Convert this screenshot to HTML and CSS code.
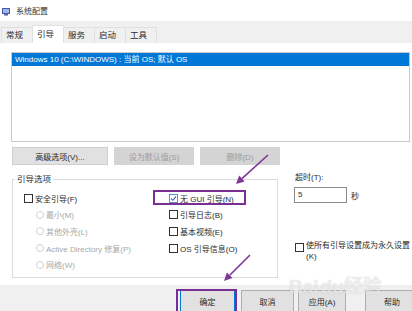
FILE: index.html
```html
<!DOCTYPE html>
<html lang="zh-CN">
<head>
<meta charset="utf-8">
<title>系统配置</title>
<link rel="stylesheet" href="styles.css">
</head>
<body>
<div class="titlebar">
  <svg class="appicon" viewBox="0 0 8 8"><rect x="0.5" y="0.5" width="7" height="5" fill="#9fb6ea" stroke="#4a56a8"/><rect x="2" y="6" width="4" height="1.6" fill="#6a6aa0"/></svg>
  <span class="title">系统配置</span>
</div>
<div class="tabbar">
  <div class="tab">常规</div>
  <div class="tab active">引导</div>
  <div class="tab">服务</div>
  <div class="tab">启动</div>
  <div class="tab">工具</div>
</div>
<div class="page">
  <div class="listbox">
    <div class="item">Windows 10 (C:\WINDOWS) : 当前 OS; 默认 OS</div>
  </div>
  <div class="btnrow">
    <button class="btn w96">高级选项(V)...</button>
    <button class="btn w80" disabled>设为默认值(S)</button>
    <button class="btn w80" disabled>删除(D)</button>
  </div>
  <div class="lower">
    <div class="group">
      <div class="legend">引导选项</div>
      <div class="cols">
        <div class="col">
          <div class="opt"><span class="cb"></span>安全引导(F)</div>
          <div class="opt sub"><span class="rb"></span>最小(M)</div>
          <div class="opt sub"><span class="rb"></span>其他外壳(L)</div>
          <div class="opt sub"><span class="rb"></span>Active Directory 修复(P)</div>
          <div class="opt sub"><span class="rb"></span>网络(W)</div>
        </div>
        <div class="col">
          <div class="opt"><span class="cb checked"><svg viewBox="0 0 7 7"><path d="M1 3.6 L2.8 5.3 L6 1.6" fill="none" stroke="#2d63b0" stroke-width="1.1"/></svg></span>无 GUI 引导(N)</div>
          <div class="opt"><span class="cb"></span>引导日志(B)</div>
          <div class="opt"><span class="cb"></span>基本视频(E)</div>
          <div class="opt"><span class="cb"></span>OS 引导信息(O)</div>
        </div>
      </div>
    </div>
    <div class="side">
      <div class="lbl">超时(T):</div>
      <div class="timeout"><div class="input">5</div><span class="unit">秒</span></div>
      <div class="perm"><span class="cb"></span><span class="ptext">使所有引导设置成为永久设置<br>(K)</span></div>
    </div>
  </div>
</div>
<div class="footer">
  <button class="btn fbtn default">确定</button>
  <button class="btn fbtn cancel">取消</button>
  <button class="btn fbtn apply">应用(A)</button>
  <button class="btn fbtn help">帮助</button>
</div>
<div class="watermark">Bai<span class="wm2">du</span>经验</div>
<svg class="annot" viewBox="0 0 412 311">
  <rect x="154" y="191" width="91" height="13" fill="none" stroke="#7a2f95" stroke-width="2"/>
  <rect x="177" y="290" width="59" height="24" fill="none" stroke="#7a2f95" stroke-width="2"/>
  <line x1="268" y1="155" x2="241.9" y2="178.6" stroke="#7e3796" stroke-width="1.6"/>
  <polygon points="236,184 244.6,181.6 239.2,175.6" fill="#7e3796"/>
  <line x1="250" y1="255" x2="229.7" y2="275.3" stroke="#7e3796" stroke-width="1.6"/>
  <polygon points="224,281 232.5,278.1 226.9,272.5" fill="#7e3796"/>
</svg>
</body>
</html>
```
FILE: styles.css
```css
* { box-sizing: border-box; }
body {
  margin: 0;
  width: 412px;
  height: 311px;
  overflow: hidden;
  position: relative;
  background: #fff;
  font-family: "Liberation Sans", "Noto Sans CJK SC", sans-serif;
  font-size: 8px;
  color: #2a2a2a;
}
.titlebar {
  height: 21px;
  padding: 2px 0 0 2px;
  display: flex;
  align-items: center;
  gap: 6px;
}
.appicon { width: 8px; height: 8px; display: block; }
.title { line-height: 10px; color: #333; }
.tabbar {
  height: 22px;
  background: #f0f0f0;
  display: flex;
  align-items: flex-end;
  padding-left: 1px;
}
.tab {
  height: 16px;
  line-height: 15px;
  padding: 0 9px 0 4px;
  font-size: 8.5px;
  border: 1px solid #e0e0e0;
  border-bottom: none;
  margin-right: -1px;
  background: #f0f0f0;
}
.tab.active {
  height: 18px;
  line-height: 17px;
  background: #fff;
  position: relative;
}
.page {
  height: 242px;
  padding: 9px 2px 0 11px;
  background: #fff;
}
.listbox {
  height: 90px;
  border: 1px solid #c9c9c9;
}
.item {
  height: 13px;
  line-height: 13px;
  background: #0078d7;
  color: #fff;
  padding-left: 3px;
  white-space: nowrap;
}
.btnrow {
  display: flex;
  gap: 6px;
  margin-top: 5px;
  padding-left: 1px;
}
.btn {
  height: 18px;
  font: inherit;
  font-size: 8px;
  border: 1px solid #d0d0d0;
  background: #e1e1e1;
  color: #2a2a2a;
  padding: 0;
}
.btn:disabled {
  background: #d4d4d4;
  border-color: #d4d4d4;
  color: #9c9c9c;
}
.w96 { width: 96px; }
.w80 { width: 80px; }
.lower {
  display: flex;
  margin-top: 8px;
}
.group {
  width: 267px;
  margin: 6px 0 0 1px;
  border: 1px solid #dcdcdc;
  height: 99px;
}
.legend {
  display: table;
  margin: -6px 0 0 2px;
  padding: 0 2px;
  background: #fff;
  line-height: 10px;
  font-size: 8.5px;
}
.cols {
  display: grid;
  grid-template-columns: 145px 1fr;
  padding: 6px 0 4px 11px;
}
.opt {
  height: 16.6px;
  display: flex;
  align-items: center;
  gap: 2px;
  white-space: nowrap;
}
.cb {
  width: 9px;
  height: 9px;
  border: 1px solid #333;
  background: #fff;
  flex: none;
  display: flex;
  align-items: center;
  justify-content: center;
}
.cb.checked { border-color: #5a8fd0; }
.cb svg { width: 7px; height: 7px; display: block; }
.sub { padding-left: 12px; color: #a8a8a8; }
.rb {
  width: 8px;
  height: 8px;
  border: 1px solid #d2d2d2;
  border-radius: 50%;
  flex: none;
}
.side {
  margin-left: 16px;
  display: flex;
  flex-direction: column;
}
.lbl { line-height: 10px; padding-left: 1px; }
.timeout {
  display: flex;
  align-items: center;
  gap: 4px;
  margin-top: 4px;
}
.input {
  width: 53px;
  height: 16px;
  border: 1px solid #8a8a8a;
  padding-left: 3px;
  line-height: 14px;
  background: #fff;
}
.perm {
  display: flex;
  align-items: flex-start;
  gap: 2px;
  margin-top: 37px;
  padding-left: 1px;
}
.perm .cb { margin-top: 3px; }
.ptext { line-height: 11px; white-space: nowrap; }
.footer {
  height: 26px;
  background: #f0f0f0;
  display: flex;
  gap: 5px;
  padding: 5px 0 0 180px;
}
.fbtn {
  height: 22px;
  flex: none;
  border-color: #adadad;
}
.fbtn.default { width: 55px; border-color: #0078d7; }
.fbtn.cancel { width: 53px; margin-left: 1px; }
.fbtn.apply { width: 48px; margin-left: -1px; }
.fbtn.help { width: 54px; margin-left: 14px; }
.watermark {
  position: absolute;
  left: 289px;
  top: 276px;
  font-family: "Liberation Sans", "Noto Sans CJK SC", sans-serif;
  font-size: 19px;
  font-weight: bold;
  line-height: 22px;
  color: rgba(255, 255, 255, 0.6);
  text-shadow: 0 0 1px rgba(120, 120, 120, 0.35);
  white-space: nowrap;
  pointer-events: none;
}
.wm2 { margin-left: 2px; }
.annot {
  position: absolute;
  left: 0;
  top: 0;
  width: 412px;
  height: 311px;
  pointer-events: none;
}
```
